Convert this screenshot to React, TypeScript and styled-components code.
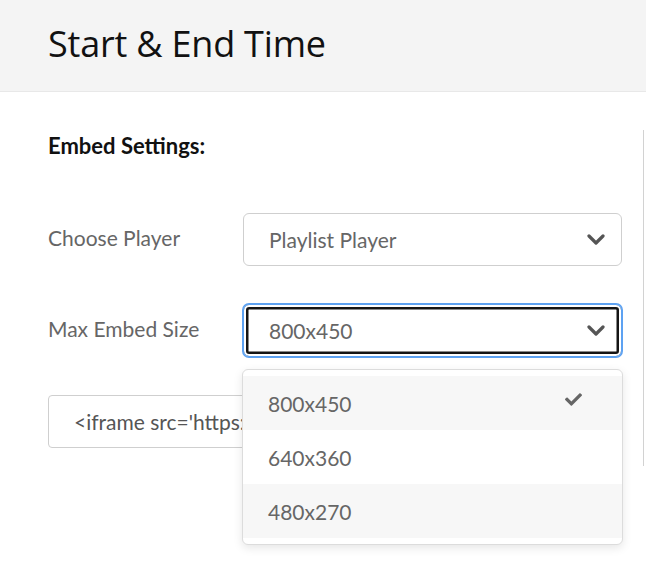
import styled, { createGlobalStyle } from "styled-components";
import { FaCheck } from "react-icons/fa";

const GlobalStyle = createGlobalStyle`
  html, body {
    margin: 0;
    padding: 0;
    background: #fff;
    font-family: "Lato", "Liberation Sans", sans-serif;
  }
`;

const Page = styled.div`
  width: 646px;
  height: 570px;
  overflow: hidden;
`;

const Header = styled.header`
  height: 92px;
  box-sizing: border-box;
  background-color: #f4f4f4;
  border-bottom: 1px solid #e8e8e8;
  display: flex;
  align-items: center;
  padding-left: 48px;
`;

const Title = styled.h1`
  margin: 0;
  margin-top: -4px;
  font-family: "Open Sans", "Noto Sans", sans-serif;
  font-weight: 400;
  font-size: 36px;
  color: #111;
  letter-spacing: -0.2px;
`;

const Body = styled.div`
  display: flex;
`;

const Main = styled.div`
  flex: none;
  width: 643px;
  box-sizing: border-box;
  padding: 41px 0 0 48px;
`;

const SidePanel = styled.div`
  flex: 1;
  margin-top: 38px;
  height: 336px;
  border-left: 1px solid #d2d2d2;
`;

const SectionTitle = styled.h2`
  margin: 0 0 54px;
  font-size: 22px;
  line-height: 26px;
  font-weight: 700;
  color: #111;
`;

const Fields = styled.div`
  display: flex;
  flex-direction: column;
  gap: 38px;
  width: 574px;
`;

const Row = styled.div`
  display: flex;
  align-items: center;
`;

const Label = styled.div`
  width: 195px;
  flex: none;
  font-size: 21px;
  color: #666;
  margin-top: -4px;
`;

const SelectWrap = styled.div`
  position: relative;
  flex: none;
  width: 379px;
`;

const SelectBox = styled.div<{ $focused?: boolean }>`
  height: 53px;
  box-sizing: border-box;
  border: 1px solid ${(p) => (p.$focused ? "#5da2f2" : "#cfcfcf")};
  border-radius: 6px;
  display: flex;
  align-items: center;
  justify-content: space-between;
  padding: 0 16px 0 25px;
  font-size: 21px;
  color: #666;
  background: #fff;
  box-shadow: ${(p) =>
    p.$focused
      ? "0 0 0 1px #5da2f2, inset 0 0 0 2px #fff, inset 0 0 0 4.5px #151515"
      : "none"};
`;

const Chevron = () => (
  <svg width="18" height="12" viewBox="0 0 18 12">
    <polyline
      points="2,2 9,9 16,2"
      fill="none"
      stroke="#555"
      strokeWidth="3.2"
      strokeLinecap="round"
      strokeLinejoin="round"
    />
  </svg>
);

const CodeBox = styled.div`
  height: 53px;
  box-sizing: border-box;
  border: 1px solid #cfcfcf;
  border-radius: 4px;
  display: flex;
  align-items: center;
  padding-left: 25px;
  font-size: 21px;
  color: #555;
  white-space: nowrap;
  overflow: hidden;
`;

const Menu = styled.ul`
  position: absolute;
  top: calc(100% + 12px);
  left: -1px;
  right: -1px;
  margin: 0;
  padding: 6px 0 6px;
  list-style: none;
  background: #fff;
  border: 1px solid #dcdcdc;
  border-radius: 6px;
  box-shadow: 0 3px 10px rgba(0, 0, 0, 0.1);
  z-index: 2;
`;

const Option = styled.li<{ $shaded?: boolean }>`
  height: 54px;
  display: flex;
  align-items: center;
  justify-content: space-between;
  padding: 0 40px 0 25px;
  font-size: 21px;
  color: #666;
  background: ${(p) => (p.$shaded ? "#f7f7f7" : "#fff")};
`;

const Check = styled(FaCheck)`
  width: 17px;
  height: 17px;
  color: #666;
  margin-top: -8px;
`;

const sizes = ["800x450", "640x360", "480x270"];

export default function App() {
  return (
    <Page>
      <GlobalStyle />
      <Header>
        <Title>Start &amp; End Time</Title>
      </Header>
      <Body>
        <Main>
          <SectionTitle>Embed Settings:</SectionTitle>
          <Fields>
            <Row>
              <Label>Choose Player</Label>
              <SelectWrap>
                <SelectBox>
                  <span>Playlist Player</span>
                  <Chevron />
                </SelectBox>
              </SelectWrap>
            </Row>
            <Row>
              <Label>Max Embed Size</Label>
              <SelectWrap>
                <SelectBox $focused>
                  <span>800x450</span>
                  <Chevron />
                </SelectBox>
                <Menu>
                  {sizes.map((s, i) => (
                    <Option key={s} $shaded={i !== 1}>
                      <span>{s}</span>
                      {i === 0 && <Check />}
                    </Option>
                  ))}
                </Menu>
              </SelectWrap>
            </Row>
            <CodeBox>
              &lt;iframe src='https://www.youtube.com/embed/videoseries' width='800' height='450'&gt;
            </CodeBox>
          </Fields>
        </Main>
        <SidePanel />
      </Body>
    </Page>
  );
}
